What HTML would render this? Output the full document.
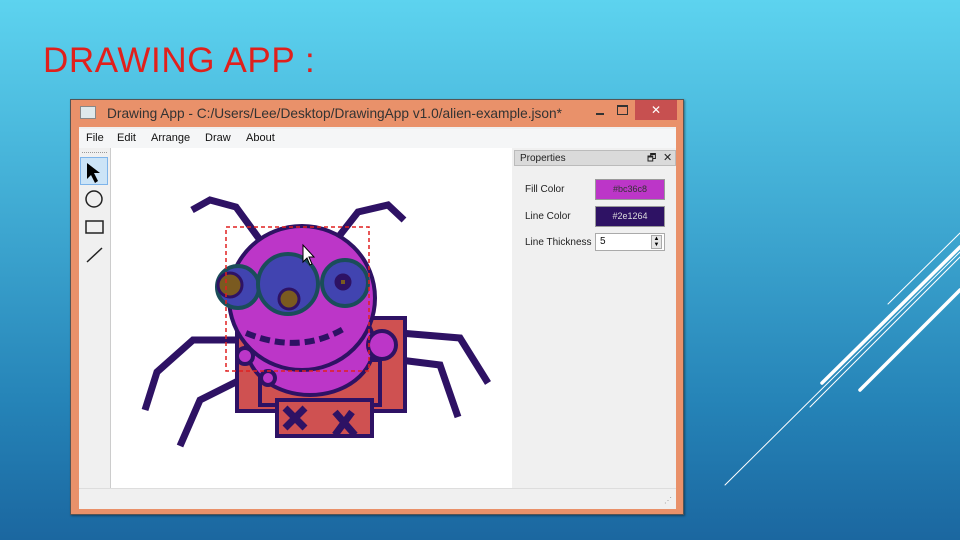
<!DOCTYPE html>
<html><head><style>
body{margin:0;width:960px;height:540px;overflow:hidden;position:relative;font-family:"Liberation Sans",sans-serif;
background:linear-gradient(180deg,#5dd3ef 0%,#3fa9d2 40%,#2583b7 75%,#1b67a0 100%);}
.abs{position:absolute}
</style></head><body>
<div class="abs" style="left:43px;top:41px;font-size:35px;color:#e0201c;letter-spacing:0.6px">DRAWING APP :</div>
<svg class="abs" style="left:0;top:0" width="960" height="540">
<g stroke="#fff" stroke-linecap="round">
<line x1="888" y1="304" x2="960" y2="233" stroke-width="1"/>
<line x1="822" y1="383" x2="960" y2="247" stroke-width="3.5"/>
<line x1="810" y1="407" x2="960" y2="257" stroke-width="1"/>
<line x1="725" y1="485" x2="960" y2="252" stroke-width="1"/>
<line x1="860" y1="390" x2="960" y2="290" stroke-width="3.5"/>
</g></svg>
<div class="abs" style="left:70px;top:99px;width:612px;height:414px;background:#e9916a;border:1px solid #555;box-shadow:1px 1px 2px rgba(0,0,0,.4)"></div>
<div class="abs" style="left:80px;top:106px;width:14px;height:11px;background:#dfe9ec;border:1px solid #888"></div>
<div class="abs" style="left:107px;top:106px;font-size:13.7px;color:#333">Drawing App - C:/Users/Lee/Desktop/DrawingApp v1.0/alien-example.json*</div>
<div class="abs" style="left:596px;top:113px;width:8px;height:2px;background:#333"></div>
<div class="abs" style="left:617px;top:105px;width:9px;height:7px;border:1px solid #333;border-top-width:2px"></div>
<div class="abs" style="left:635px;top:100px;width:42px;height:20px;background:#c75050;color:#fff;font-size:12px;text-align:center;line-height:20px">✕</div>
<div class="abs" style="left:79px;top:127px;width:597px;height:381px;background:#f0f0f0"></div>
<div class="abs" style="left:79px;top:129px;width:597px;height:19px;background:#f5f6f7;font-size:11px;color:#111">
<span class="abs" style="left:7px;top:3px">File</span><span class="abs" style="left:38px;top:3px">Edit</span><span class="abs" style="left:72px;top:3px">Arrange</span><span class="abs" style="left:126px;top:3px">Draw</span><span class="abs" style="left:167px;top:3px">About</span></div>
<div class="abs" style="left:82px;top:152px;width:25px;border-top:1px dotted #999"></div>
<div class="abs" style="left:80px;top:157px;width:28px;height:28px;background:#cce4f7;border:1px solid #7eb4ea;box-sizing:border-box"></div>
<svg class="abs" style="left:79px;top:155px" width="32" height="120">
<path d="M8 8 L8 24 L12 20 L16 28 L19 26 L15 18 L21 18 Z" fill="#000"/>
<circle cx="15" cy="44" r="8" fill="none" stroke="#222" stroke-width="1.5"/>
<rect x="7" y="66" width="17" height="12" fill="none" stroke="#222" stroke-width="1.5"/>
<line x1="8" y1="107" x2="23" y2="93" stroke="#222" stroke-width="1.5"/>
</svg>
<div class="abs" style="left:110px;top:148px;width:1px;height:340px;background:#ccc"></div>
<div class="abs" style="left:111px;top:148px;width:401px;height:340px;background:#fff"></div>
<svg class="abs" style="left:0;top:0" width="960" height="540">
<g stroke="#2e1264" stroke-width="7" fill="none" stroke-linejoin="miter">
<polyline points="192,210 210,200 236,207 260,240"/>
<polyline points="340,235 358,212 388,205 404,220"/>
<polyline points="240,340 193,340 157,372 145,410"/>
<polyline points="250,375 200,400 180,446"/>
<polyline points="400,333 460,338 488,383"/>
<polyline points="400,360 440,365 458,417"/>
</g>
<g stroke="#2e1264" stroke-width="4">
<rect x="237" y="318" width="168" height="93" fill="#cf5151"/>
<rect x="260" y="360" width="120" height="45" fill="#cf5151"/>
<rect x="277" y="400" width="95" height="36" fill="#cf5151"/>
<ellipse cx="310" cy="345" rx="64" ry="50" fill="#bc36c8"/>
<ellipse cx="302" cy="298" rx="73" ry="72" fill="#bc36c8"/>
<circle cx="245" cy="356" r="8" fill="#bc36c8"/>
<circle cx="268" cy="378" r="7" fill="#bc36c8"/>
<circle cx="382" cy="345" r="14" fill="#bc36c8"/>
</g>
<g stroke="#2e1264" stroke-width="6" stroke-dasharray="10 5" fill="none">
<path d="M246 333 Q300 355 345 328"/>
</g>
<g stroke="#2e1264" stroke-width="7"><path d="M285 408 L305 428 M305 408 L285 428 M335 412 L355 435 M352 412 L335 435"/></g>
<g stroke="#1a4d5a" stroke-width="4" fill="#4144b0">
<circle cx="238" cy="287" r="21"/><circle cx="345" cy="283" r="23"/><circle cx="288" cy="284" r="30"/>
</g>
<g stroke="#2e1264" stroke-width="3">
<circle cx="230" cy="285" r="12" fill="#7a5a20"/><circle cx="289" cy="299" r="10" fill="#7a5a20"/><circle cx="343" cy="282" r="7" fill="#2e1264"/>
</g>
<rect x="341" y="280" width="4" height="4" fill="#7a5a20"/>
<rect x="226" y="227" width="143" height="144" fill="none" stroke="#e02020" stroke-width="1.5" stroke-dasharray="4 3"/>
<path d="M303 245 L303 262 L307 258 L310 265 L312 264 L309 257 L314 257 Z" fill="#fff" stroke="#000" stroke-width="1"/>
</svg>
<div class="abs" style="left:514px;top:150px;width:162px;height:16px;background:#dadada;border:1px solid #bbb;box-sizing:border-box;font-size:10px;color:#222">
<span class="abs" style="left:5px;top:2px">Properties</span><span class="abs" style="left:132px;top:0px;font-size:10px">🗗</span><span class="abs" style="left:148px;top:0px;font-size:11px">✕</span></div>
<div class="abs" style="left:525px;top:184px;font-size:10px;color:#222">Fill Color</div>
<div class="abs" style="left:525px;top:211px;font-size:10px;color:#222">Line Color</div>
<div class="abs" style="left:525px;top:237px;font-size:10px;color:#222">Line Thickness</div>
<div class="abs" style="left:595px;top:179px;width:70px;height:21px;background:#bc36c8;border:1px solid #999;box-sizing:border-box;font-size:9px;color:#333;text-align:center;line-height:19px">#bc36c8</div>
<div class="abs" style="left:595px;top:206px;width:70px;height:21px;background:#2e1264;border:1px solid #999;box-sizing:border-box;font-size:9px;color:#ddd;text-align:center;line-height:19px">#2e1264</div>
<div class="abs" style="left:595px;top:233px;width:70px;height:18px;background:#fff;border:1px solid #aaa;box-sizing:border-box;font-size:10px;color:#111;padding-left:4px;line-height:16px">5</div>
<div class="abs" style="left:651px;top:235px;width:11px;height:14px;background:#e6e6e6;border:1px solid #aaa;box-sizing:border-box;font-size:6px;line-height:6px;text-align:center">▲<br>▼</div>
<div class="abs" style="left:79px;top:488px;width:597px;height:20px;background:#f0f0f0;border-top:1px solid #ddd"></div>
<div class="abs" style="left:664px;top:496px;font-size:8px;color:#999">⋰</div>
</body></html>
